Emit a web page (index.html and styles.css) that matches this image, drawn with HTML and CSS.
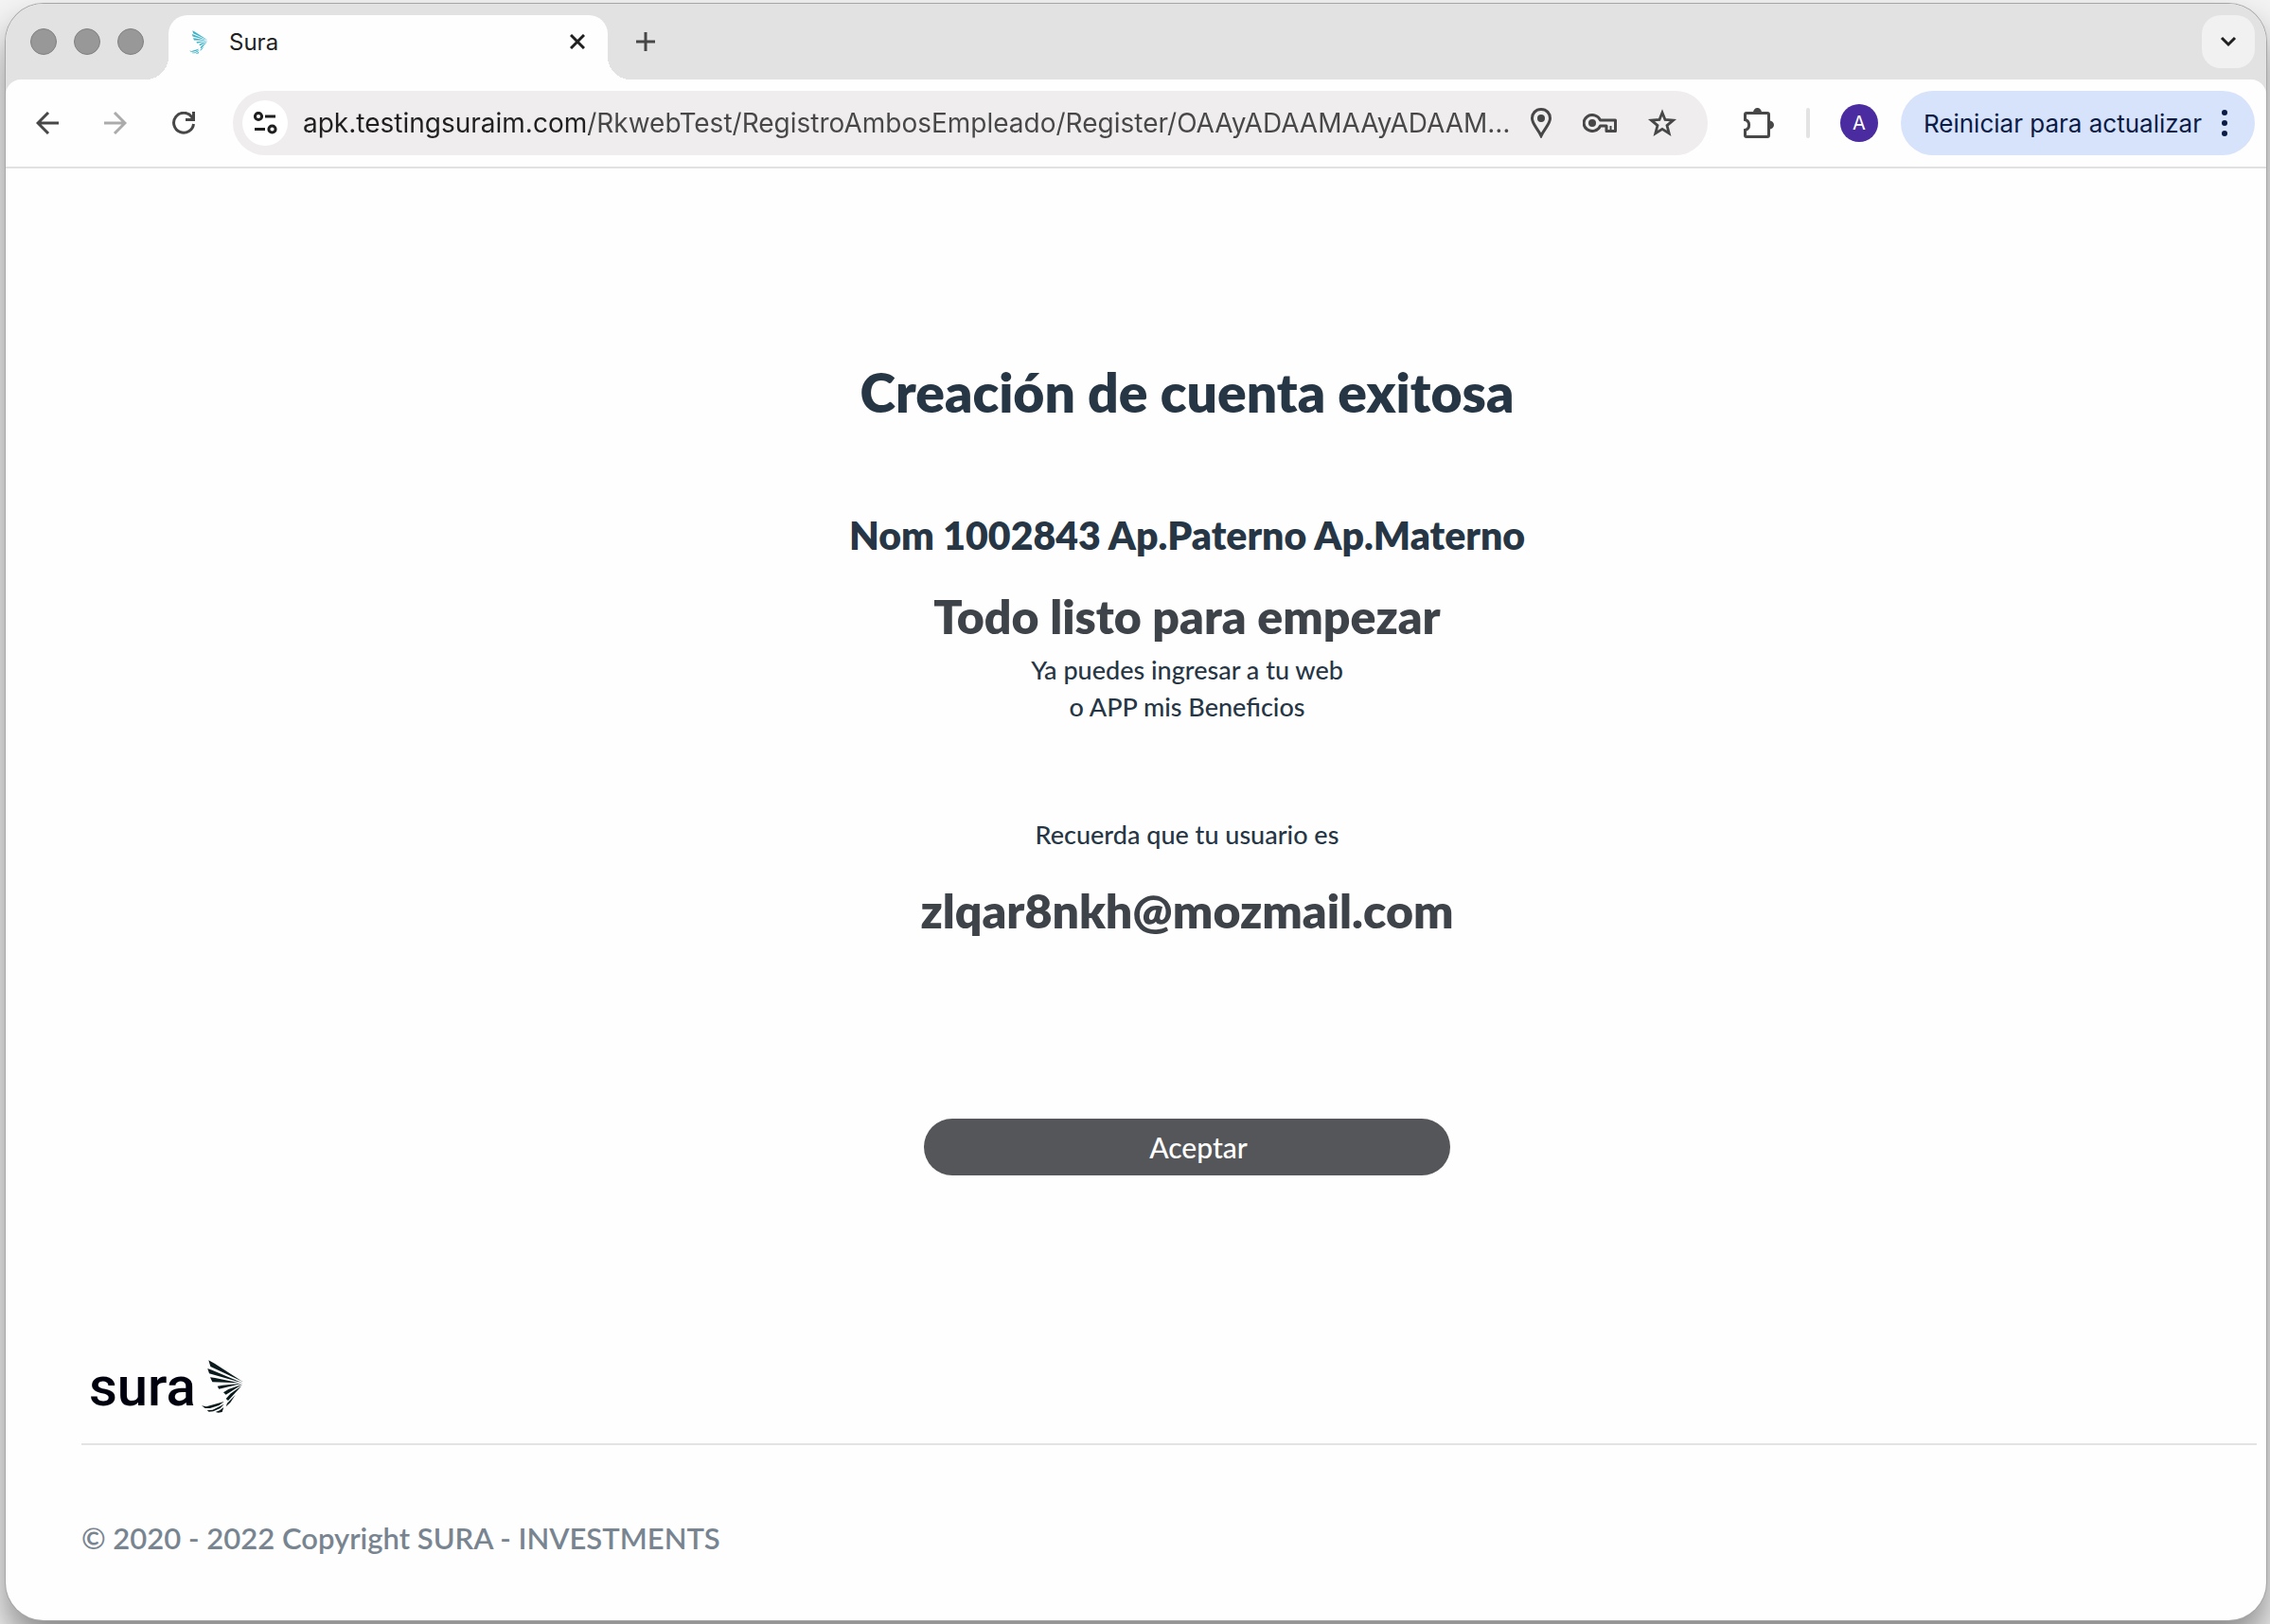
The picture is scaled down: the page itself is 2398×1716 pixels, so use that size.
FILE: index.html
```html
<!DOCTYPE html>
<html lang="es">
<head>
  <meta charset="UTF-8" />
  <meta name="viewport" content="width=device-width, initial-scale=1.0"/>
  <title>Sura</title>
  <link rel="stylesheet" href="styles.css">
</head>
<body>

  <!-- Wing of the logo, shared by the tab and the footer -->
  <svg class="sprite" aria-hidden="true">
    <symbol id="wing" viewBox="453 84 135 166">
      <path d="M475 84 L494 94 L585 153 L481 104 Z"/>
      <path d="M472 110 L486 115 L582 156 L477 126 Z"/>
      <path d="M480 138 L496 140 L572 156 L487 153 Z"/>
      <path d="M503 166 L520 163 L584 157 L508 175 Z"/>
      <path d="M522 186 L538 176 L583 160 L530 193 Z"/>
      <path d="M530 206 L544 190 L580 165 L537 212 Z"/>
      <path d="M530 231 L534 220 L560 194 L544 218 Z"/>
      <path d="M453 228 L468 231 L524 215 L508 227 L480 236 L464 236 Z"/>
      <path d="M470 243 L488 241 L524 223 L512 236 L490 246 L476 247 Z"/>
      <path d="M497 248 L510 243 L523 233 L518 248 L506 250 Z"/>
    </symbol>
  </svg>

  <div class="window">
    <!-- Tab strip -->
    <div class="tab-strip">
      <div class="lights">
        <span></span>
        <span></span>
        <span></span>
      </div>
      <div class="tab">
        <svg class="favicon" aria-hidden="true"><use href="#wing"/></svg>
        <span class="tab-title">Sura</span>
        <button type="button" class="icon-btn" aria-label="Cerrar">
          <svg width="16" height="16" viewBox="0 0 16 16"><path d="M1 1 L15 15 M15 1 L1 15" stroke="#1f1f1f" stroke-width="3"/></svg>
        </button>
      </div>
      <button type="button" class="icon-btn new-tab" aria-label="Nueva">
        <svg width="20" height="20" viewBox="0 0 20 20"><path d="M10 0 V20 M0 10 H20" stroke="#474747" stroke-width="3"/></svg>
      </button>
      <button type="button" class="icon-btn tab-search" aria-label="Buscar">
        <svg width="18" height="12" viewBox="0 0 18 12"><path d="M2 2 L9 9 L16 2" fill="none" stroke="#1f1f1f" stroke-width="3"/></svg>
      </button>
    </div>

    <!-- Toolbar -->
    <header class="toolbar">
      <nav class="history">
        <button type="button" class="icon-btn" aria-label="Anterior">
          <svg width="24" height="24" viewBox="0 0 24 24"><path d="M24 12 H3 M13 1 L2 12 L13 23" fill="none" stroke="#474747" stroke-width="3"/></svg>
        </button>
        <button type="button" class="icon-btn" aria-label="Siguiente">
          <svg width="24" height="24" viewBox="0 0 24 24"><path d="M0 12 H21 M11 1 L22 12 L11 23" fill="none" stroke="#ababab" stroke-width="3"/></svg>
        </button>
        <button type="button" class="icon-btn" aria-label="Recargar">
          <svg width="24" height="24" viewBox="0 0 24 24"><path d="M22.5 13 A10.5 10.5 0 1 1 20.5 5.5 L22.5 8.5 M22.5 0 V8.5 H14" fill="none" stroke="#474747" stroke-width="3"/></svg>
        </button>
      </nav>

      <form class="address">
        <button type="button" class="icon-btn site-info" aria-label="Sitio">
          <svg width="26" height="24" viewBox="0 0 26 24" fill="none" stroke="#1f1f1f" stroke-width="3">
            <circle cx="6" cy="5" r="3.6"/><path d="M13 5 H24 M2 18.500 H13"/><circle cx="20.500" cy="18.500" r="3.6"/>
          </svg>
        </button>
        <input type="text" class="url" aria-label="URL" value="apk.testingsuraim.com/RkwebTest/RegistroAmbosEmpleado/Register/OAAyADAAMAAyADAAM…">
        <button type="button" class="icon-btn" aria-label="Mapa">
          <svg width="24" height="32" viewBox="0 0 24 32"><path d="M12 1.500 C6 1.500 2.500 6 2.500 11 C2.500 17 8 21 12 29.500 C16 21 21.500 17 21.500 11 C21.500 6 18 1.500 12 1.500 Z" fill="none" stroke="#474747" stroke-width="3"/><circle cx="12" cy="11" r="4" fill="#474747"/></svg>
        </button>
        <button type="button" class="icon-btn" aria-label="Clave">
          <svg width="36" height="20" viewBox="0 0 36 20"><path d="M18.500 7 A9 8.500 0 1 0 18.500 13 H25 V18.500 H34.500 V7 Z" fill="none" stroke="#474747" stroke-width="3" stroke-linejoin="round"/><circle cx="10" cy="10" r="4" fill="#474747"/><path d="M29.500 18 V13" stroke="#474747" stroke-width="2"/></svg>
        </button>
        <button type="button" class="icon-btn" aria-label="Favorito">
          <svg width="32" height="30" viewBox="0 0 32 30"><path d="M16 4 L19 11.500 L27.500 12.200 L21 17.600 L23.200 26 L16 21.400 L8.800 26 L11 17.600 L4.500 12.200 L13 11.500 Z" fill="none" stroke="#474747" stroke-width="2.800"/></svg>
        </button>
      </form>

      <button type="button" class="icon-btn" aria-label="Extensiones">
        <svg width="32" height="32" viewBox="0 0 32 32"><path d="M3 5.500 H25 Q26.500 5.500 26.500 7 V29 Q26.500 30.500 25 30.500 H3 Q1.500 30.500 1.500 29 V23.500 C7 22 7 14 1.500 12.500 V7 Q1.500 5.500 3 5.500 Z" fill="none" stroke="#474747" stroke-width="3"/><path d="M10 5 A4.500 5 0 0 1 19 5 Z M27 13.500 A5 4.500 0 0 1 27 22.500 Z" fill="#474747"/></svg>
      </button>
      <span class="divider"></span>
      <button type="button" class="avatar">A</button>
      <button type="button" class="update">
        Reiniciar para actualizar
        <svg width="6" height="28" viewBox="0 0 6 28" fill="#0a1b46"><circle cx="3" cy="3" r="3"/><circle cx="3" cy="14" r="3"/><circle cx="3" cy="25" r="3"/></svg>
      </button>
    </header>

    <!-- Page -->
    <main>
      <h1>Creación de cuenta exitosa</h1>
      <h3>Nom 1002843 Ap.Paterno Ap.Materno</h3>
      <h2>Todo listo para empezar</h2>
      <p>Ya puedes ingresar a tu web<br>o APP mis Beneficios</p>
      <p class="reminder">Recuerda que tu usuario es</p>
      <h2 class="user">zlqar8nkh@mozmail.com</h2>
      <button type="button" class="accept">Aceptar</button>
    </main>

    <footer>
      <div class="logo">
        <span>sura</span>
        <svg class="logo-wing" aria-hidden="true"><use href="#wing"/></svg>
      </div>
      <p class="copyright">© 2020 - 2022 Copyright SURA - INVESTMENTS</p>
    </footer>
  </div>

</body>
</html>
```

FILE: styles.css
```css
* {
  box-sizing: border-box;
}
body {
  margin: 0;
  padding: 4px 4px 4px 6px;
  min-height: 100vh;
  display: flex;
  background-color: #f4f4f4;
  font-family: Inter, Roboto, sans-serif;
}
h1, h2, h3, p {
  margin: 0;
}
button, input {
  border: none;
  padding: 0;
  background: none;
  font-family: inherit;
}
.sprite {
  position: absolute;
  width: 0;
  height: 0;
}

.window {
  flex: 1;
  display: flex;
  flex-direction: column;
  min-width: 0;
  background-color: #fefefe;
  border-radius: 40px;
  overflow: hidden;
  box-shadow: 0 0 0 1px #a6a6a6, 0 24px 40px rgba(0, 0, 0, 0.45);
}

/* tab strip */
.tab-strip {
  height: 80px;
  display: flex;
  align-items: center;
  padding-right: 12px;
  background-color: #e2e2e2;
}
.lights {
  display: flex;
  gap: 18px;
  padding-left: 26px;
}
.lights span {
  width: 28px;
  height: 28px;
  border-radius: 50%;
  background-color: #989898;
  border: 1px solid #808080;
}
.tab {
  position: relative;
  align-self: flex-end;
  display: flex;
  align-items: center;
  width: 464px;
  height: 68px;
  margin-left: 26px;
  padding: 0 24px 12px 22px;
  background-color: #fefefe;
  border-radius: 20px 20px 0 0;
}
.tab::before,
.tab::after {
  content: "";
  position: absolute;
  bottom: 0;
  width: 24px;
  height: 24px;
}
.tab::before {
  left: -24px;
  background: radial-gradient(circle at 0 0, #e2e2e2 24px, #fefefe 24px);
}
.tab::after {
  right: -24px;
  background: radial-gradient(circle at 100% 0, #e2e2e2 24px, #fefefe 24px);
}
.favicon {
  width: 20px;
  height: 25px;
  fill: #3fb2c8;
}
.tab-title {
  flex: 1;
  margin-left: 22px;
  font-size: 24px;
  color: #1f1f1f;
}
.icon-btn {
  display: flex;
  align-items: center;
  justify-content: center;
  cursor: pointer;
}
.new-tab {
  margin-left: 30px;
}
.tab-search {
  width: 56px;
  height: 56px;
  margin-left: auto;
  background-color: #f1f1f1;
  border-radius: 20px;
}

/* toolbar, the shadow fills its rounded corners with the strip colour */
.toolbar {
  height: 94px;
  display: flex;
  align-items: center;
  padding: 0 12px 0 32px;
  background-color: #fefefe;
  border-bottom: 2px solid #e1e1e1;
  border-radius: 16px 16px 0 0;
  box-shadow: 0 -16px 0 16px #e2e2e2;
  clip-path: inset(0);
}
.history {
  display: flex;
  gap: 48px;
}
.address {
  flex: 1;
  min-width: 0;
  height: 68px;
  display: flex;
  align-items: center;
  gap: 32px;
  margin: 0 38px 0 40px;
  padding: 0 32px 0 10px;
  background-color: #efedee;
  border-radius: 34px;
}
.site-info {
  width: 48px;
  height: 48px;
  margin-right: -16px;
  background-color: #fff;
  border-radius: 50%;
}
.url {
  flex: 1;
  min-width: 0;
  margin-right: -20px;
  font-size: 28px;
  text-overflow: ellipsis;
  /* the host is darker than the path */
  background: linear-gradient(to right, #1f1f1f 302px, #474747 302px);
  background-clip: text;
  -webkit-background-clip: text;
  -webkit-text-fill-color: transparent;
}
.divider {
  width: 4px;
  height: 32px;
  margin: 0 32px 0 34px;
  border-radius: 2px;
  background-color: #e3e3e3;
}
.avatar {
  width: 40px;
  height: 40px;
  border-radius: 50%;
  background-color: #4b2ca0;
  color: #fff;
  font-size: 20px;
}
.update {
  height: 68px;
  display: flex;
  align-items: center;
  gap: 21px;
  margin-left: 24px;
  padding: 0 29px 0 24px;
  border-radius: 34px;
  background-color: #d7e2fb;
  color: #0a1b46;
  font-size: 26px;
}

/* page */
main {
  flex: 1;
  display: flex;
  flex-direction: column;
  align-items: center;
  padding: 196px 10px 0 118px;
  font-family: Lato, sans-serif;
  color: #263645;
  text-align: center;
}
h1, h2, h3 {
  font-weight: 800;
}
h1 {
  font-size: 57px;
  line-height: 80px;
}
h3 {
  margin-top: 82px;
  font-size: 41px;
  line-height: 60px;
}
h2 {
  margin-top: 20px;
  font-size: 50px;
  line-height: 70px;
  color: #3e4349;
}
main p {
  font-size: 27px;
  line-height: 39px;
  font-weight: 500;
}
h2 + p {
  margin-top: 2px;
}
main .reminder {
  margin-top: 96px;
}
.user {
  margin-top: 26px;
}
.accept {
  width: 556px;
  height: 60px;
  margin-top: 185px;
  padding-left: 24px;
  border-radius: 30px;
  background-color: #555659;
  color: #fff;
  font-size: 30px;
  font-weight: 500;
}

/* footer */
footer {
  padding: 0 10px 67px 80px;
  font-family: Lato, sans-serif;
}
.logo {
  display: flex;
  align-items: center;
  gap: 6px;
  padding: 0 0 28px 8px;
  border-bottom: 2px solid #e3e3e3;
  font-family: Roboto, sans-serif;
  font-size: 58px;
  line-height: 64px;
  font-weight: 500;
  color: #00010f;
}
.logo-wing {
  width: 45px;
  height: 56px;
  fill: #0b1a1c;
}
.copyright {
  margin-top: 78px;
  font-size: 31px;
  line-height: 40px;
  font-weight: 600;
  color: #788591;
}
```
